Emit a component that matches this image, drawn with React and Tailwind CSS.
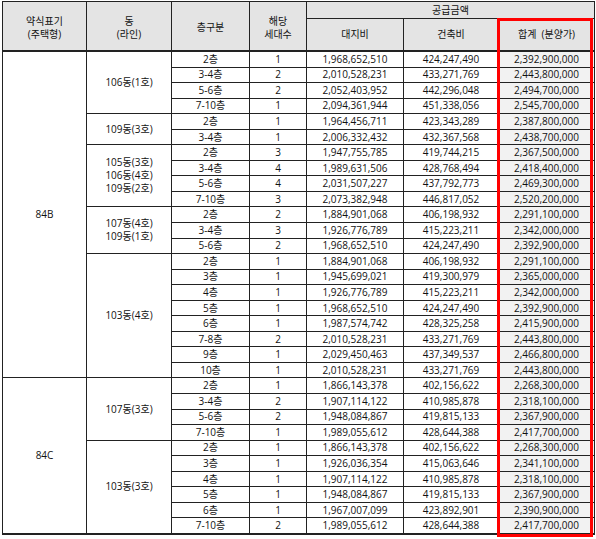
import React from "react";

const groups = [
  {
    type: "84B",
    dongs: [
      {
        label: ["106동(1호)"],
        rows: [
          ["2층", "1", "1,968,652,510", "424,247,490", "2,392,900,000"],
          ["3-4층", "2", "2,010,528,231", "433,271,769", "2,443,800,000"],
          ["5-6층", "2", "2,052,403,952", "442,296,048", "2,494,700,000"],
          ["7-10층", "1", "2,094,361,944", "451,338,056", "2,545,700,000"],
        ],
      },
      {
        label: ["109동(3호)"],
        rows: [
          ["2층", "1", "1,964,456,711", "423,343,289", "2,387,800,000"],
          ["3-4층", "1", "2,006,332,432", "432,367,568", "2,438,700,000"],
        ],
      },
      {
        label: ["105동(3호)", "106동(4호)", "109동(2호)"],
        rows: [
          ["2층", "3", "1,947,755,785", "419,744,215", "2,367,500,000"],
          ["3-4층", "4", "1,989,631,506", "428,768,494", "2,418,400,000"],
          ["5-6층", "4", "2,031,507,227", "437,792,773", "2,469,300,000"],
          ["7-10층", "3", "2,073,382,948", "446,817,052", "2,520,200,000"],
        ],
      },
      {
        label: ["107동(4호)", "109동(1호)"],
        rows: [
          ["2층", "2", "1,884,901,068", "406,198,932", "2,291,100,000"],
          ["3-4층", "3", "1,926,776,789", "415,223,211", "2,342,000,000"],
          ["5-6층", "2", "1,968,652,510", "424,247,490", "2,392,900,000"],
        ],
      },
      {
        label: ["103동(4호)"],
        rows: [
          ["2층", "1", "1,884,901,068", "406,198,932", "2,291,100,000"],
          ["3층", "1", "1,945,699,021", "419,300,979", "2,365,000,000"],
          ["4층", "1", "1,926,776,789", "415,223,211", "2,342,000,000"],
          ["5층", "1", "1,968,652,510", "424,247,490", "2,392,900,000"],
          ["6층", "1", "1,987,574,742", "428,325,258", "2,415,900,000"],
          ["7-8층", "2", "2,010,528,231", "433,271,769", "2,443,800,000"],
          ["9층", "1", "2,029,450,463", "437,349,537", "2,466,800,000"],
          ["10층", "1", "2,010,528,231", "433,271,769", "2,443,800,000"],
        ],
      },
    ],
  },
  {
    type: "84C",
    dongs: [
      {
        label: ["107동(3호)"],
        rows: [
          ["2층", "1", "1,866,143,378", "402,156,622", "2,268,300,000"],
          ["3-4층", "2", "1,907,114,122", "410,985,878", "2,318,100,000"],
          ["5-6층", "2", "1,948,084,867", "419,815,133", "2,367,900,000"],
          ["7-10층", "1", "1,989,055,612", "428,644,388", "2,417,700,000"],
        ],
      },
      {
        label: ["103동(3호)"],
        rows: [
          ["2층", "1", "1,866,143,378", "402,156,622", "2,268,300,000"],
          ["3층", "1", "1,926,036,354", "415,063,646", "2,341,100,000"],
          ["4층", "1", "1,907,114,122", "410,985,878", "2,318,100,000"],
          ["5층", "1", "1,948,084,867", "419,815,133", "2,367,900,000"],
          ["6층", "1", "1,967,007,099", "423,892,901", "2,390,900,000"],
          ["7-10층", "2", "1,989,055,612", "428,644,388", "2,417,700,000"],
        ],
      },
    ],
  },
];

function Row({ r }) {
  return (
    <div className="flex gap-px h-[14.55px]">
      <div className="w-[77px] bg-white flex items-center justify-center">{r[0]}</div>
      <div className="w-[56px] bg-white flex items-center justify-center">{r[1]}</div>
      <div className="w-[96px] bg-white flex items-center justify-center">{r[2]}</div>
      <div className="w-[94px] bg-white flex items-center justify-center">{r[3]}</div>
      <div className="w-[95px] bg-[#f2f2f2] flex items-center justify-center">{r[4]}</div>
    </div>
  );
}

export default function App() {
  return (
    <div className="relative pl-[2px] pt-[1px] text-[10px] leading-[13px] text-[#111] font-['Open_Sans','Noto_Sans_CJK_KR',sans-serif] bg-white w-[596px] h-[539px]">
      <div className="w-[593px] flex flex-col gap-px bg-[#222] pt-px px-px pb-[2px]">
        {/* Header */}
        <div className="flex gap-px pb-px">
          <div className="w-[83px] h-[48px] bg-[#e4e4e4] flex flex-col items-center justify-center pt-[3px]">
            <span>약식표기</span>
            <span>(주택형)</span>
          </div>
          <div className="w-[84px] h-[48px] bg-[#e4e4e4] flex flex-col items-center justify-center pt-[3px]">
            <span>동</span>
            <span>(라인)</span>
          </div>
          <div className="w-[77px] h-[48px] bg-[#e4e4e4] flex items-center justify-center pt-[3px]">층구분</div>
          <div className="w-[56px] h-[48px] bg-[#e4e4e4] flex flex-col items-center justify-center pt-[3px]">
            <span>해당</span>
            <span>세대수</span>
          </div>
          <div className="flex flex-col gap-px">
            <div className="w-[287px] h-[16px] bg-[#e4e4e4] flex items-center justify-center">공급금액</div>
            <div className="flex gap-px h-[31px]">
              <div className="w-[96px] bg-[#e4e4e4] flex items-center justify-center">대지비</div>
              <div className="w-[94px] bg-[#e4e4e4] flex items-center justify-center">건축비</div>
              <div className="w-[95px] bg-[#e4e4e4] flex items-center justify-center whitespace-pre">합계  (분양가)</div>
            </div>
          </div>
        </div>
        {/* Body */}
        <div className="flex flex-col gap-px">
          {groups.map((g) => (
            <div key={g.type} className="flex gap-px">
              <div className="w-[83px] bg-white flex items-center justify-center">{g.type}</div>
              <div className="flex flex-col gap-px">
                {g.dongs.map((d, i) => (
                  <div key={i} className="flex gap-px">
                    <div className="w-[84px] bg-white flex flex-col items-center justify-center">
                      {d.label.map((l) => (
                        <span key={l}>{l}</span>
                      ))}
                    </div>
                    <div className="flex flex-col gap-px">
                      {d.rows.map((r, j) => (
                        <Row key={j} r={r} />
                      ))}
                    </div>
                  </div>
                ))}
              </div>
            </div>
          ))}
        </div>
      </div>
      <div className="absolute left-[497px] top-[18px] w-[96px] h-[519px] border-[3px] border-[#ff0000]" />
    </div>
  );
}
